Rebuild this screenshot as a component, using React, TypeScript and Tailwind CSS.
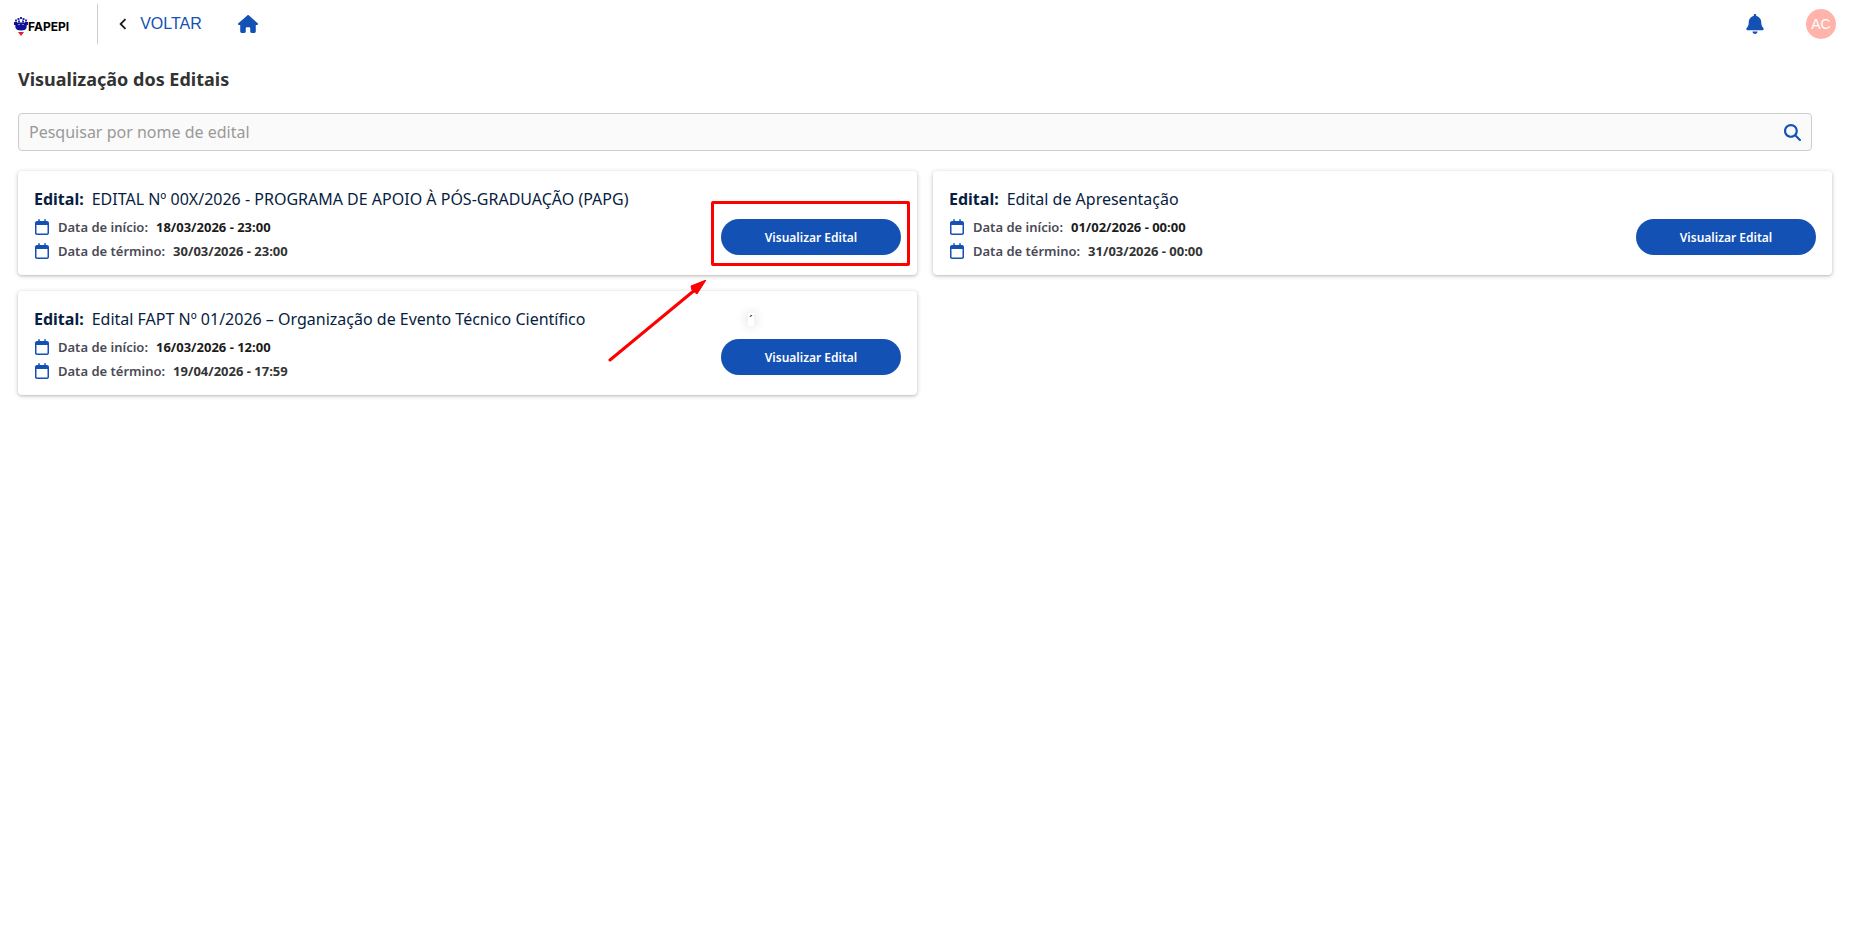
import {
  FaBell,
  FaHouse,
  FaMagnifyingGlass,
  FaRegCalendar,
} from "react-icons/fa6";
import { MdChevronLeft } from "react-icons/md";

type Edital = {
  nome: string;
  inicio: string;
  termino: string;
  destaque?: boolean;
  marca?: boolean;
};

const editais: Edital[] = [
  {
    nome: "EDITAL Nº 00X/2026 - PROGRAMA DE APOIO À PÓS-GRADUAÇÃO (PAPG)",
    inicio: "18/03/2026 - 23:00",
    termino: "30/03/2026 - 23:00",
    destaque: true,
  },
  {
    nome: "Edital de Apresentação",
    inicio: "01/02/2026 - 00:00",
    termino: "31/03/2026 - 00:00",
  },
  {
    nome: "Edital FAPT Nº 01/2026 – Organização de Evento Técnico Científico",
    inicio: "16/03/2026 - 12:00",
    termino: "19/04/2026 - 17:59",
    marca: true,
  },
];

function Logo() {
  return (
    <a href="#" className="flex items-center pt-1.5" aria-label="FAPEPI">
      <svg width="14" height="20" viewBox="0 0 14 20">
        <path
          d="M1 5.5 L13 5.5 L12.5 11 Q11.5 13.5 7 13.5 Q2.5 13.5 1.5 11 Z"
          fill="#10109a"
        />
        <path d="M0 5h3v3H0zM11 5h3v3h-3z" fill="#10109a" />
        <g fill="#2a2a9c">
          <rect x="1" y="2.5" width="2" height="2" />
          <rect x="3.5" y="1" width="2" height="2" />
          <rect x="6" y="0" width="2" height="2" />
          <rect x="8.5" y="1" width="2" height="2" />
          <rect x="11" y="2.5" width="2" height="2" />
          <rect x="4" y="3.5" width="2" height="2" />
          <rect x="8" y="3.5" width="2" height="2" />
        </g>
        <path d="M4 7h2v1H4zM8 7h2v1H8z" fill="#8a8ad0" />
        <path d="M4 15h6L7 19z" fill="#d8232a" />
      </svg>
      <span className="font-['Inter',sans-serif] text-[12px] font-bold leading-5 text-black">
        FAPEPI
      </span>
    </a>
  );
}

function Header() {
  return (
    <header className="flex h-12 items-center px-3.5">
      <Logo />
      <div className="ml-7 h-10 w-px bg-[#cccccc]" />
      <button
        type="button"
        className="ml-3.5 flex items-center gap-1.5 font-['Liberation_Sans',Arial,sans-serif] text-base text-[#1351b4]"
      >
        <MdChevronLeft className="size-[22px] text-[#1b1b1b]" />
        VOLTAR
      </button>
      <a href="#" aria-label="Início" className="ml-9 text-[#1351b4]">
        <FaHouse className="h-[18px] w-5" />
      </a>
      <button
        type="button"
        aria-label="Notificações"
        className="ml-auto text-[#1351b4]"
      >
        <FaBell className="size-5" />
      </button>
      <button
        type="button"
        className="ml-[41px] flex size-[30px] items-center justify-center rounded-full bg-[#ffb3ab] font-['Liberation_Sans',Arial,sans-serif] text-sm text-white"
      >
        AC
      </button>
    </header>
  );
}

function DataLinha({
  rotulo,
  valor,
  cor,
}: {
  rotulo: string;
  valor: string;
  cor: string;
}) {
  return (
    <div className="flex h-6 items-center text-[13px]">
      <FaRegCalendar className="mr-2 size-4 text-[#1351b4]" />
      <p className="flex gap-2 pt-0.5">
        <span className="font-semibold text-[#4a4a55]">{rotulo}</span>
        <span className={`font-bold ${cor}`}>{valor}</span>
      </p>
    </div>
  );
}

function EditalCard({ edital }: { edital: Edital }) {
  return (
    <article className="relative flex justify-between rounded bg-white px-4 pb-3 pt-4 shadow-[0_1px_5px_rgba(0,0,0,0.2),0_1px_2px_rgba(0,0,0,0.12)]">
      <div>
        <h2 className="mb-1 text-base leading-6 text-[#071d41]">
          <span className="mr-2 font-bold">Edital:</span>
          {edital.nome}
        </h2>
        <DataLinha
          rotulo="Data de início:"
          valor={edital.inicio}
          cor="text-[#1b1b1b]"
        />
        <DataLinha
          rotulo="Data de término:"
          valor={edital.termino}
          cor="text-[#333333]"
        />
      </div>

      <div className="relative mb-2 self-end">
        <button
          type="button"
          className="h-9 w-[180px] rounded-full bg-[#1351b4] pt-px text-[12px] font-semibold text-white"
        >
          Visualizar Edital
        </button>
        {edital.destaque && (
          <div className="pointer-events-none absolute -bottom-[11px] -left-2.5 -right-[9px] -top-[18px] rounded-xs border-3 border-[#ff0000]" />
        )}
      </div>

      {/* Seta apontando para o botão */}
      {edital.destaque && (
        <svg
          width="98"
          height="82"
          viewBox="0 0 98 82"
          className="pointer-events-none absolute right-[211px] top-[109px] z-10"
        >
          <path d="M2 80 L88 9" stroke="#ff0000" strokeWidth="3" strokeLinecap="round" />
          <path d="M98 0 L83 6 L84 10 L89 14 Z" fill="#ff0000" stroke="#ff0000" />
        </svg>
      )}

      {edital.marca && (
        <span className="absolute right-[163px] top-[22px] h-[13px] w-1.5 bg-white text-center text-[12px] leading-4 text-[#1b1b1b] shadow-[0_0_12px_rgba(0,0,0,0.2)]">
          ´
        </span>
      )}
    </article>
  );
}

export default function App() {
  return (
    <div className="min-h-screen bg-white font-['Noto_Sans',sans-serif]">
      <Header />
      <main className="px-[18px] pt-[17px]">
        <h1 className="text-lg font-bold leading-7 text-[#333333]">
          Visualização dos Editais
        </h1>
        <form className="mr-5 mt-5 flex h-[38px] items-center rounded border border-[#cccccc] bg-[#fafafa] px-2.5">
          <input
            type="text"
            aria-label="Pesquisar por nome de edital"
            placeholder="Pesquisar por nome de edital"
            className="min-w-0 flex-1 bg-transparent text-base text-[#333333] outline-none placeholder:text-[#999999]"
          />
          <button type="button" aria-label="Pesquisar" className="text-[#1351b4]">
            <FaMagnifyingGlass className="size-[17px]" />
          </button>
        </form>
        <section className="mt-5 grid grid-cols-2 gap-4">
          {editais.map((edital) => (
            <EditalCard key={edital.nome} edital={edital} />
          ))}
        </section>
      </main>
    </div>
  );
}
